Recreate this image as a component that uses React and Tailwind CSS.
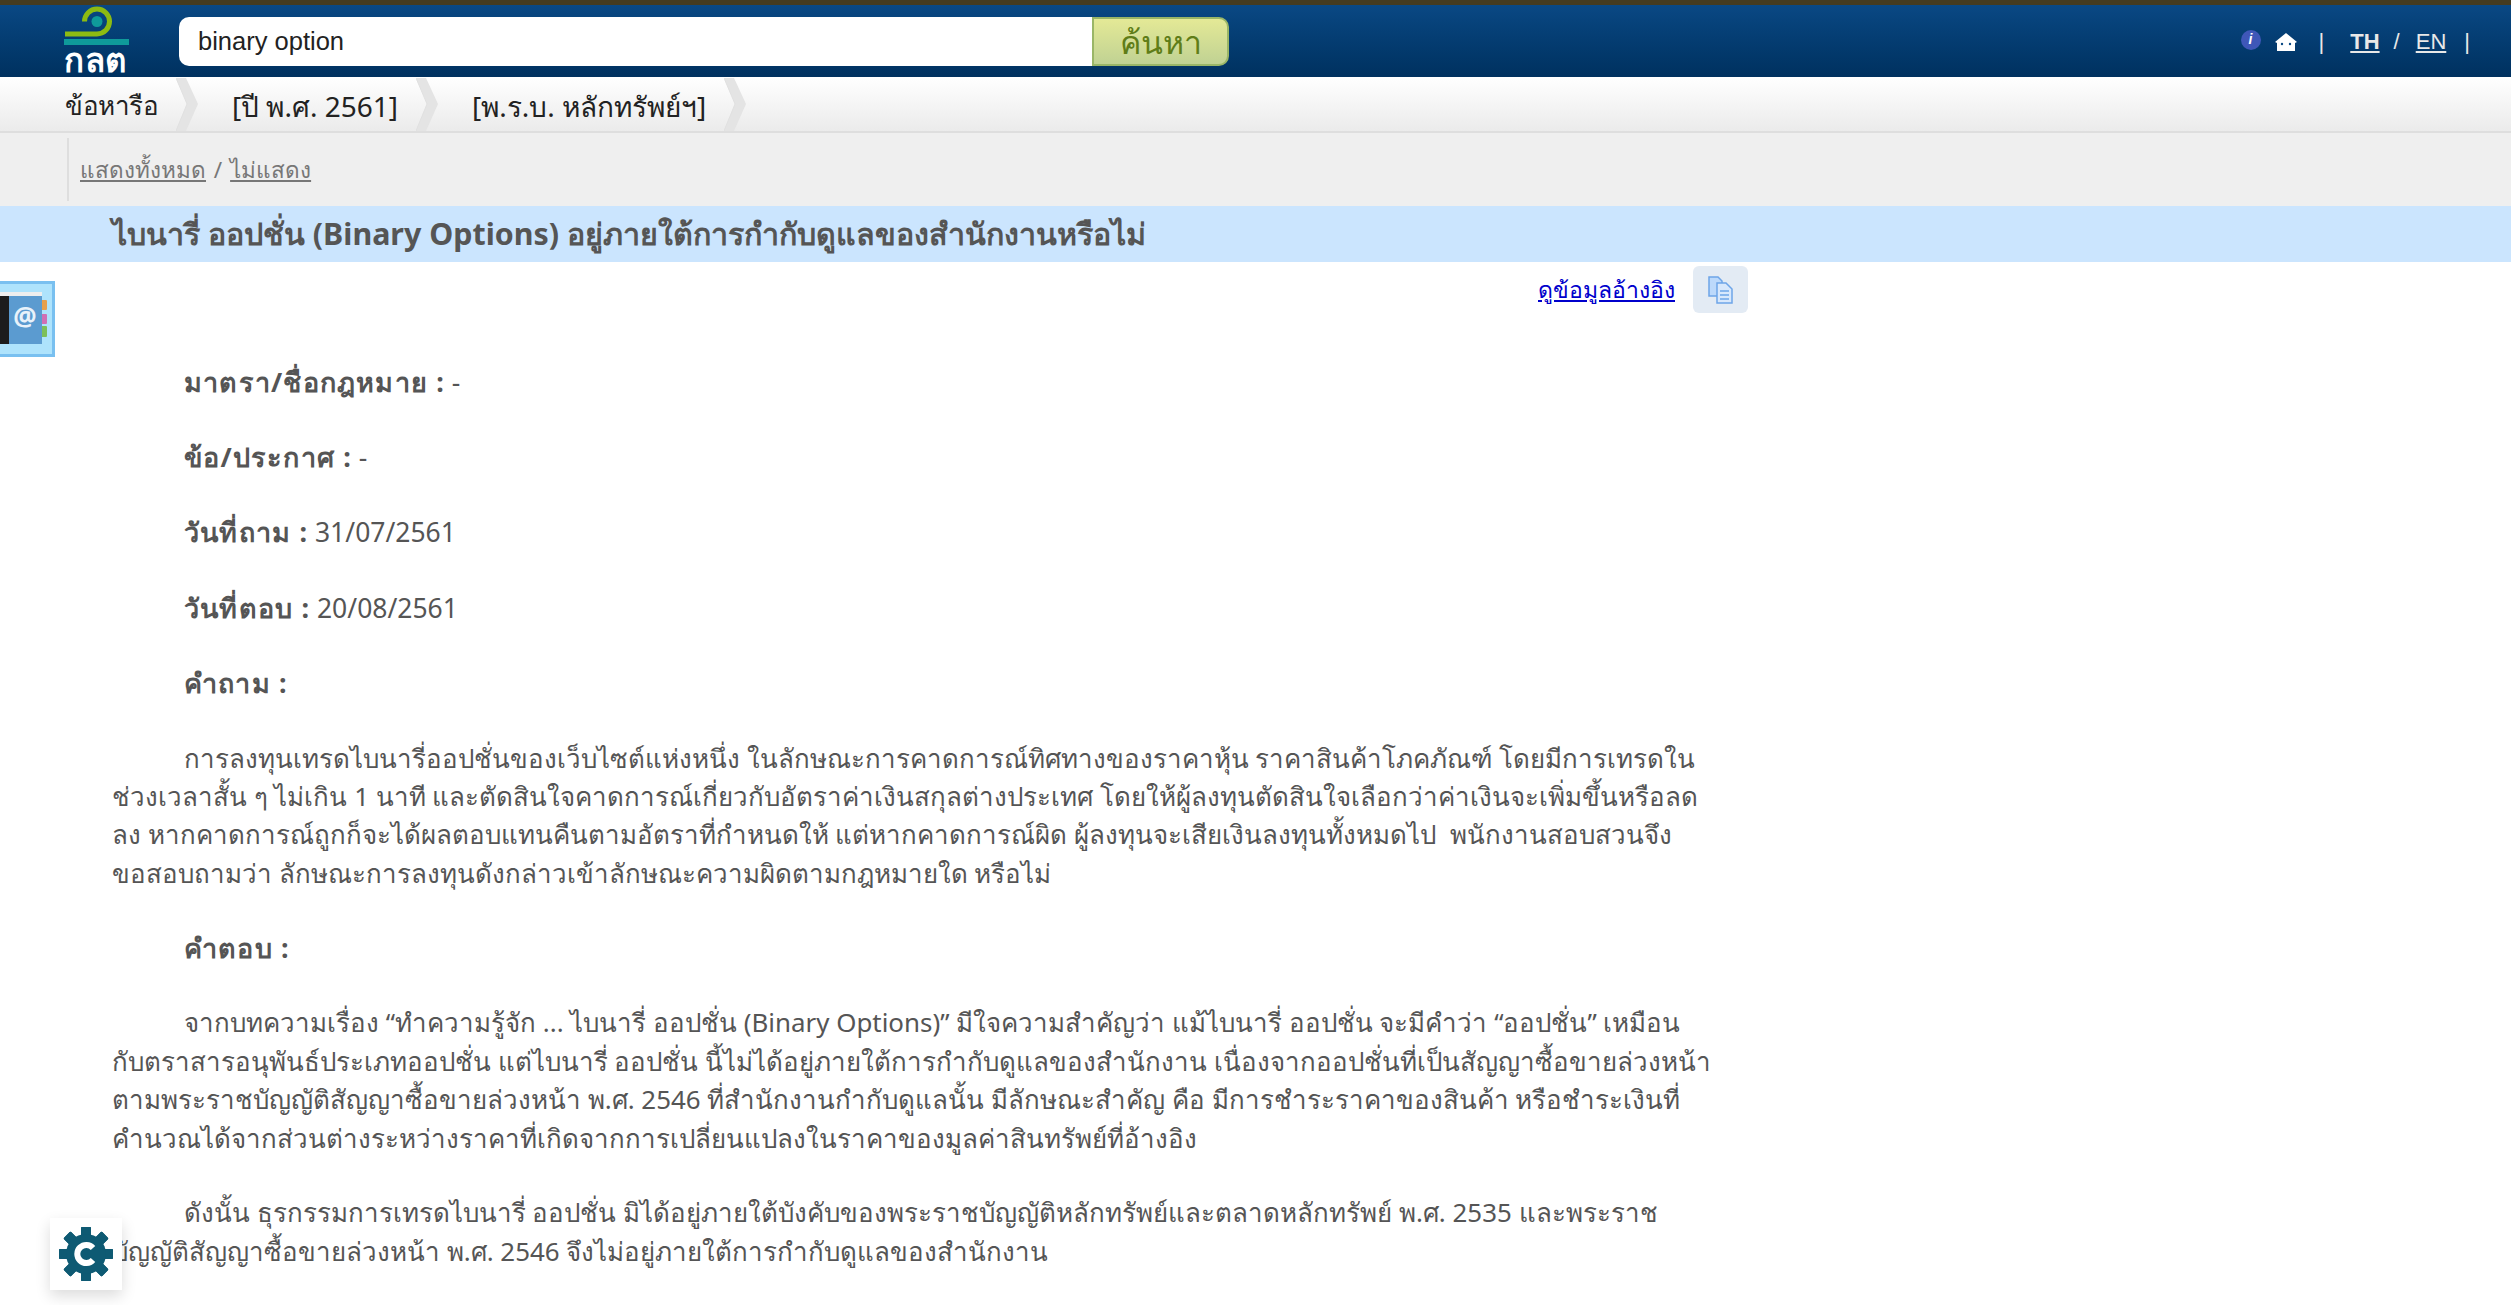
import React from 'react';

const font = { fontFamily: 'Tahoma, "Noto Sans", "DejaVu Sans", sans-serif' };
const arial = { fontFamily: '"Liberation Sans", Arial, "Noto Sans", sans-serif' };

const Chevron = () => (
  <svg width="22" height="53" viewBox="0 0 22 53" className="shrink-0">
    <path d="M0 0 L10 0 L22 26 L10 53 L0 53 L11 26 Z" fill="#e4e4e4" />
    <path d="M0 0 L11 26 L0 53" fill="none" stroke="#e0e0e0" />
  </svg>
);

const Logo = () => (
  <div className="flex w-[66px] flex-col">
    <svg width="66" height="33" viewBox="0 0 66 33" className="block">
      <path d="M1 28 H33 A12.5 12.5 0 1 0 20.5 15.5" fill="none" stroke="#8dbb12" strokeWidth="5" />
      <circle cx="33" cy="15.5" r="5.5" fill="#0f9a9a" />
    </svg>
    <div className="h-[6px] w-[65px] bg-[#0f9a9a]" />
    <span className="mt-[3px] text-[33px] leading-[24px] font-black tracking-[0.5px] text-white">กลต</span>
  </div>
);

const Gear = () => (
  <svg width="54" height="54" viewBox="0 0 54 54">
    <g fill="#0e5a73">
      {[0, 45, 90, 135, 180, 225, 270, 315].map((a) => (
        <rect key={a} x="22" y="0" width="10" height="54" rx="1" transform={`rotate(${a} 27 27)`} />
      ))}
      <circle cx="27" cy="27" r="20" />
    </g>
    <path d="M34 21 A9 9 0 1 0 34 33" fill="none" stroke="#fff" strokeWidth="6" />
  </svg>
);

const Label = ({ children }) => (
  <b className="text-[27px] tracking-[1.2px]">{children} :</b>
);

const Field = ({ label, value }) => (
  <p className="mb-[36.8px] pl-[72px] leading-[38.4px]">
    <Label>{label}</Label> <span className="text-[26.5px]">{value}</span>
  </p>
);

export default function App() {
  return (
    <div className="h-[1305px] overflow-hidden bg-white text-[25.9px] text-[#555555]" style={font}>
      <header className="flex h-[77px] items-start border-t-[5px] border-[#453b20] bg-gradient-to-b from-[#0a4884] to-[#00315f]">
        <div className="w-[179px] pl-[64px] pt-[1px]">
          <Logo />
        </div>
        <div className="mt-[12px] flex h-[49px]">
          <div className="w-[913px] rounded-l-[10px] bg-white pl-[19px] text-[25.5px] leading-[49px] text-[#222]" style={arial}>binary option</div>
          <button className="w-[137px] rounded-r-[10px] border-2 border-[#9ab667] bg-gradient-to-b from-[#e4e996] to-[#c0d293] text-[32px] leading-[42px] text-[#5f7d18]">ค้นหา</button>
        </div>
        <div className="ml-auto mt-[20px] flex items-center pr-[41px] text-[22px] text-[#e8e8e8]" style={arial}>
          <span className="-mt-[4px] flex h-5 w-5 items-center justify-center rounded-full bg-[#3f57b8] text-[14px] font-bold italic text-white">i</span>
          <svg width="22" height="18" viewBox="0 0 22 18" className="ml-[14px]">
            <path d="M11 0 L22 9 L20 10 V18 H2 V10 L0 9 Z" fill="#fff" />
            <circle cx="7" cy="11" r="1.2" fill="#0a4884" />
            <circle cx="15" cy="11" r="1.2" fill="#0a4884" />
          </svg>
          <span className="ml-[22px]">|</span>
          <a className="ml-[26px] font-bold underline">TH</a>
          <span className="ml-[14px]">/</span>
          <a className="ml-[16px] underline">EN</a>
          <span className="ml-[18px]">|</span>
        </div>
      </header>

      <nav className="flex h-[56px] items-center border-b-2 border-[#dedede] bg-gradient-to-b from-white to-[#ebebeb] pl-[65px] pt-[3px] text-[28px] text-[#222]">
        <span className="whitespace-nowrap text-[26px] tracking-[-0.5px]">ข้อหารือ</span>
        <span className="-mt-[3px] ml-[18px] mr-[34px] flex"><Chevron /></span>
        <span className="whitespace-nowrap">[ปี พ.ศ. 2561]</span>
        <span className="-mt-[3px] ml-[18px] mr-[34px] flex"><Chevron /></span>
        <span className="whitespace-nowrap">[พ.ร.บ. หลักทรัพย์ฯ]</span>
        <span className="-mt-[3px] ml-[18px] flex"><Chevron /></span>
      </nav>

      <div className="h-[73px] bg-[#efefef] pl-[67px] pt-[5px]">
        <div className="h-[63px] border-l-2 border-[#dedede] pl-[11px] text-[22.5px] leading-[64px] text-[#777]">
          <a className="underline">แสดงทั้งหมด</a> <span className="mx-[2px]">/</span> <a className="underline">ไม่แสดง</a>
        </div>
      </div>

      <h1 className="h-[56px] bg-[#cbe5fe] pl-[112px] text-[30.4px] font-bold leading-[56px] text-[#555]">
        ไบนารี่ ออปชั่น (Binary Options) อยู่ภายใต้การกำกับดูแลของสำนักงานหรือไม่
      </h1>

      <div className="relative w-[1748px]">
        <div className="flex items-center justify-end pt-[4px]">
          <a className="mr-[18px] text-[23px] text-[#0000cc] underline">ดูข้อมูลอ้างอิง</a>
          <span className="flex h-[47px] w-[55px] items-center justify-center rounded-[6px] bg-[#e3ebf4]">
            <svg width="26" height="28" viewBox="0 0 26 28">
              <path d="M1 1 H10 L14 5 V20 H1 Z" fill="#bcd9fb" stroke="#6ea5e8" strokeWidth="1.5" />
              <path d="M9 7 H18 L24 13 V27 H9 Z" fill="#d8e8fc" stroke="#6ea5e8" strokeWidth="1.5" />
              <path d="M12 15 H21 M12 19 H21 M12 23 H21" stroke="#6ea5e8" strokeWidth="1.5" />
            </svg>
          </span>
        </div>

        <article className="w-[1760px] pl-[112px] pt-[50px]">
          <Field label="มาตรา/ชื่อกฎหมาย" value="-" />
          <Field label="ข้อ/ประกาศ" value="-" />
          <Field label="วันที่ถาม" value="31/07/2561" />
          <Field label="วันที่ตอบ" value="20/08/2561" />
          <p className="mb-[36.4px] pl-[72px] leading-[38.4px]"><Label>คำถาม</Label></p>
          <p className="mb-[36.4px] indent-[72px] leading-[38.4px]">
            การลงทุนเทรดไบนารี่ออปชั่นของเว็บไซต์แห่งหนึ่ง ในลักษณะการคาดการณ์ทิศทางของราคาหุ้น ราคาสินค้าโภคภัณฑ์ โดยมีการเทรดใน<br />
            ช่วงเวลาสั้น ๆ ไม่เกิน 1 นาที และตัดสินใจคาดการณ์เกี่ยวกับอัตราค่าเงินสกุลต่างประเทศ โดยให้ผู้ลงทุนตัดสินใจเลือกว่าค่าเงินจะเพิ่มขึ้นหรือลด<br />
            ลง หากคาดการณ์ถูกก็จะได้ผลตอบแทนคืนตามอัตราที่กำหนดให้ แต่หากคาดการณ์ผิด ผู้ลงทุนจะเสียเงินลงทุนทั้งหมดไป&nbsp; พนักงานสอบสวนจึง<br />
            ขอสอบถามว่า ลักษณะการลงทุนดังกล่าวเข้าลักษณะความผิดตามกฎหมายใด หรือไม่
          </p>
          <p className="mb-[36.4px] pl-[72px] leading-[38.4px]"><Label>คำตอบ</Label></p>
          <p className="mb-[36.4px] indent-[72px] leading-[38.4px]">
            จากบทความเรื่อง “ทำความรู้จัก ... ไบนารี่ ออปชั่น (Binary Options)” มีใจความสำคัญว่า แม้ไบนารี่ ออปชั่น จะมีคำว่า “ออปชั่น” เหมือน<br />
            กับตราสารอนุพันธ์ประเภทออปชั่น แต่ไบนารี่ ออปชั่น นี้ไม่ได้อยู่ภายใต้การกำกับดูแลของสำนักงาน เนื่องจากออปชั่นที่เป็นสัญญาซื้อขายล่วงหน้า<br />
            ตามพระราชบัญญัติสัญญาซื้อขายล่วงหน้า พ.ศ. 2546 ที่สำนักงานกำกับดูแลนั้น มีลักษณะสำคัญ คือ มีการชำระราคาของสินค้า หรือชำระเงินที่<br />
            คำนวณได้จากส่วนต่างระหว่างราคาที่เกิดจากการเปลี่ยนแปลงในราคาของมูลค่าสินทรัพย์ที่อ้างอิง
          </p>
          <p className="indent-[72px] leading-[38.4px]">
            ดังนั้น ธุรกรรมการเทรดไบนารี่ ออปชั่น มิได้อยู่ภายใต้บังคับของพระราชบัญญัติหลักทรัพย์และตลาดหลักทรัพย์ พ.ศ. 2535 และพระราช<br />
            บัญญัติสัญญาซื้อขายล่วงหน้า พ.ศ. 2546 จึงไม่อยู่ภายใต้การกำกับดูแลของสำนักงาน
          </p>
        </article>

        <div className="absolute left-0 top-[19px] h-[76px] w-[55px] border-[3px] border-l-0 border-[#79c0f0] bg-[#aee3fc]">
          <svg width="50" height="58" viewBox="0 0 50 58" className="mt-[6px] block">
            <rect x="41" y="10" width="6" height="10" rx="1" fill="#e6a04c" />
            <rect x="41" y="24" width="6" height="10" rx="1" fill="#d06fb5" />
            <rect x="41" y="36" width="6" height="11" rx="1" fill="#7cc05a" />
            <rect x="0" y="2" width="42" height="52" fill="#5b9bd0" />
            <rect x="0" y="6" width="9" height="48" fill="#1c1c1c" />
            <rect x="0" y="2" width="42" height="4" fill="#eeeeee" />
            <text x="25" y="36" textAnchor="middle" fontSize="26" fontWeight="700" fill="#e8f2fa">@</text>
          </svg>
        </div>
      </div>

      <div className="fixed left-[50px] top-[1218px] flex h-[72px] w-[72px] items-center justify-center bg-white shadow-[0_6px_14px_rgba(0,0,0,0.14)]">
        <Gear />
      </div>
    </div>
  );
}
